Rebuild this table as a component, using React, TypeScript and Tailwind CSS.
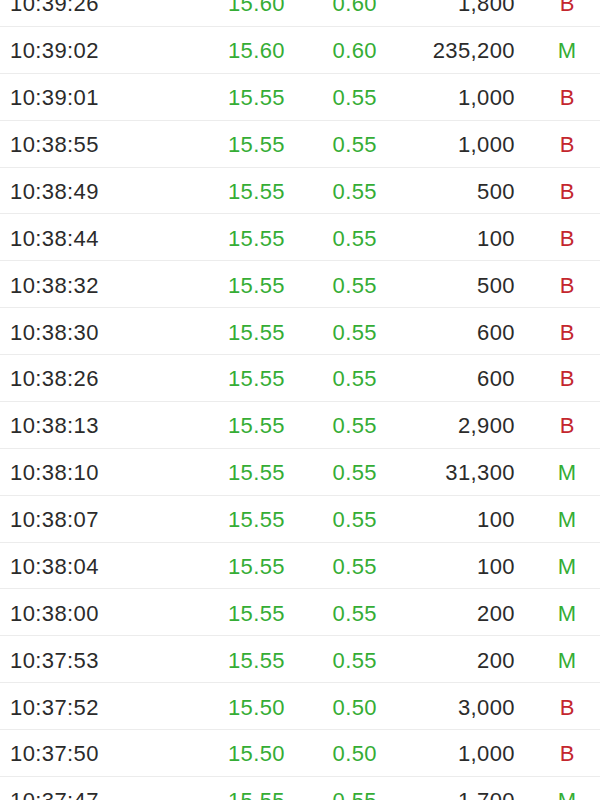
const rows: [string, string, string, string, "B" | "M"][] = [
  ["10:39:26", "15.60", "0.60", "1,800", "B"],
  ["10:39:02", "15.60", "0.60", "235,200", "M"],
  ["10:39:01", "15.55", "0.55", "1,000", "B"],
  ["10:38:55", "15.55", "0.55", "1,000", "B"],
  ["10:38:49", "15.55", "0.55", "500", "B"],
  ["10:38:44", "15.55", "0.55", "100", "B"],
  ["10:38:32", "15.55", "0.55", "500", "B"],
  ["10:38:30", "15.55", "0.55", "600", "B"],
  ["10:38:26", "15.55", "0.55", "600", "B"],
  ["10:38:13", "15.55", "0.55", "2,900", "B"],
  ["10:38:10", "15.55", "0.55", "31,300", "M"],
  ["10:38:07", "15.55", "0.55", "100", "M"],
  ["10:38:04", "15.55", "0.55", "100", "M"],
  ["10:38:00", "15.55", "0.55", "200", "M"],
  ["10:37:53", "15.55", "0.55", "200", "M"],
  ["10:37:52", "15.50", "0.50", "3,000", "B"],
  ["10:37:50", "15.50", "0.50", "1,000", "B"],
  ["10:37:47", "15.55", "0.55", "1,700", "M"],
]

const App: React.FC = () => {
  return (
    <div className="h-[800px] overflow-hidden bg-white font-['Liberation_Sans',Arial,sans-serif] text-[22px] text-[#2b2b2b]">
      <div className="-mt-[20px]">
        {rows.map(([time, price, change, vol, type], i) => (
          <div key={i} className="flex h-[46.875px] items-center border-b border-[#ececec] pt-[2px]">
            {/* Time */}
            <div className="w-[200px] pl-[10px] tracking-[0.4px]">{time}</div>
            {/* Price & change */}
            <div className="w-[85px] text-right text-[#35ad35] tracking-[0.4px]">{price}</div>
            <div className="w-[92px] text-right text-[#35ad35] tracking-[0.4px]">{change}</div>
            {/* Volume */}
            <div className="w-[138px] text-right tracking-[0.4px]">{vol}</div>
            {/* Type */}
            <div
              className={
                type === "B"
                  ? "w-[85px] pl-[19px] text-center text-[#c4262e]"
                  : "w-[85px] pl-[19px] text-center text-[#35ad35]"
              }
            >
              {type}
            </div>
          </div>
        ))}
      </div>
    </div>
  )
}

export default App
